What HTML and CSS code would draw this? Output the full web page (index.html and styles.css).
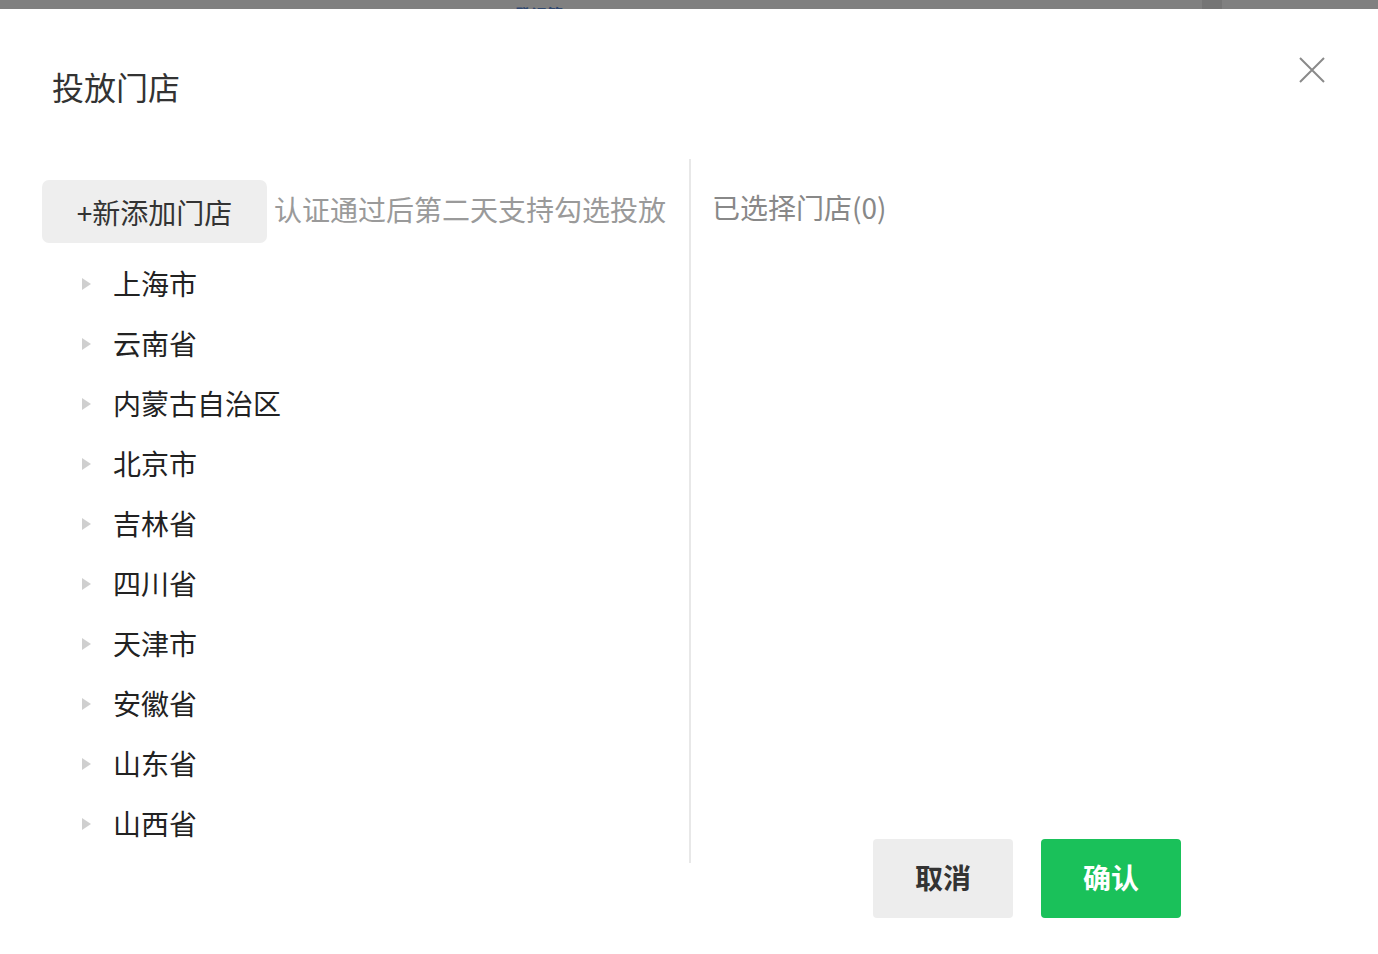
FILE: index.html
```html
<!DOCTYPE html>
<html lang="zh-CN">
<head>
<meta charset="utf-8">
<title>投放门店</title>
<link rel="stylesheet" href="styles.css">
</head>
<body>
<div class="mask-strip">
  <span class="mask-text">登记管</span>
  <span class="mask-scroll"></span>
</div>
<div class="dialog">
  <div class="dialog-header">
    <h2 class="dialog-title">投放门店</h2>
    <button class="close-btn" aria-label="关闭">
      <svg width="28" height="28" viewBox="0 0 28 28"><path d="M2 2 L26 26 M26 2 L2 26" stroke="#8a8a8a" stroke-width="2" fill="none"/></svg>
    </button>
  </div>
  <div class="dialog-body">
    <div class="panel-left">
      <div class="toolbar">
        <button class="add-btn">+新添加门店</button>
        <span class="hint">认证通过后第二天支持勾选投放</span>
      </div>
      <ul class="tree">
        <li class="tree-item"><span class="caret"></span><span class="label">上海市</span></li>
        <li class="tree-item"><span class="caret"></span><span class="label">云南省</span></li>
        <li class="tree-item"><span class="caret"></span><span class="label">内蒙古自治区</span></li>
        <li class="tree-item"><span class="caret"></span><span class="label">北京市</span></li>
        <li class="tree-item"><span class="caret"></span><span class="label">吉林省</span></li>
        <li class="tree-item"><span class="caret"></span><span class="label">四川省</span></li>
        <li class="tree-item"><span class="caret"></span><span class="label">天津市</span></li>
        <li class="tree-item"><span class="caret"></span><span class="label">安徽省</span></li>
        <li class="tree-item"><span class="caret"></span><span class="label">山东省</span></li>
        <li class="tree-item"><span class="caret"></span><span class="label">山西省</span></li>
      </ul>
    </div>
    <div class="panel-right">
      <div class="selected-title">已选择门店(0)</div>
    </div>
  </div>
  <div class="dialog-footer">
    <button class="btn btn-cancel">取消</button>
    <button class="btn btn-ok">确认</button>
  </div>
</div>
</body>
</html>
```
FILE: styles.css
```css
* { box-sizing: border-box; }
html, body {
  margin: 0;
  padding: 0;
  background: #ffffff;
  font-family: "Noto Sans CJK SC", "Noto Sans", "Liberation Sans", sans-serif;
  width: 1378px;
  height: 954px;
  overflow: hidden;
}
.mask-strip {
  height: 9px;
  background: #808080;
  display: flex;
  align-items: flex-end;
  overflow: hidden;
  position: relative;
}
.mask-text {
  margin-left: 515px;
  font-size: 16px;
  line-height: 16px;
  color: #1b3a6b;
  font-weight: bold;
  margin-bottom: -13px;
  opacity: 0.8;
}
.mask-scroll {
  margin-left: auto;
  margin-right: 156px;
  width: 20px;
  height: 9px;
  background: #757575;
}
.dialog {
  background: #fff;
}
.dialog-header {
  display: flex;
  justify-content: space-between;
  align-items: flex-start;
  padding: 0 52px 0 52px;
  height: 150px;
}
.dialog-title {
  margin: 57px 0 0 0;
  font-size: 32px;
  line-height: 40px;
  font-weight: normal;
  color: #333;
  letter-spacing: 0;
}
.close-btn {
  margin-top: 47px;
  border: 0;
  padding: 0;
  background: transparent;
  width: 28px;
  height: 28px;
  display: flex;
}
.dialog-body {
  display: flex;
  height: 704px;
}
.panel-left {
  width: 691px;
  padding: 21px 0 0 42px;
  border-right: 2px solid #e8e8e8;
}
.toolbar {
  display: flex;
  align-items: center;
  gap: 7px;
}
.add-btn {
  width: 225px;
  height: 63px;
  border: 0;
  border-radius: 7px;
  background: #eeeeee;
  font-family: inherit;
  font-size: 28px;
  color: #333;
  padding: 0 0 0 0;
}
.hint {
  font-size: 28px;
  color: #9a9a9a;
  margin-top: -5px;
}
.tree {
  list-style: none;
  margin: 10px 0 0 0;
  padding: 0;
}
.tree-item {
  display: flex;
  align-items: center;
  height: 60px;
  padding-left: 40px;
}
.caret {
  width: 0;
  height: 0;
  border-left: 9px solid #cfcfcf;
  border-top: 6px solid transparent;
  border-bottom: 6px solid transparent;
  margin-right: 22px;
  margin-top: 2px;
}
.label {
  font-size: 28px;
  color: #222;
}
.panel-right {
  flex: 1;
  padding: 28px 0 0 21px;
}
.selected-title {
  font-size: 28px;
  line-height: 40px;
  color: #888;
}
.dialog-footer {
  display: flex;
  justify-content: flex-end;
  gap: 28px;
  padding-right: 197px;
  margin-top: -24px;
}
.btn {
  width: 140px;
  height: 79px;
  border: 0;
  border-radius: 4px;
  font-family: inherit;
  font-size: 28px;
  font-weight: bold;
  padding: 0 0 4px 0;
}
.btn-cancel {
  background: #ededed;
  color: #333;
}
.btn-ok {
  background: #1ac15a;
  color: #fff;
}
```
